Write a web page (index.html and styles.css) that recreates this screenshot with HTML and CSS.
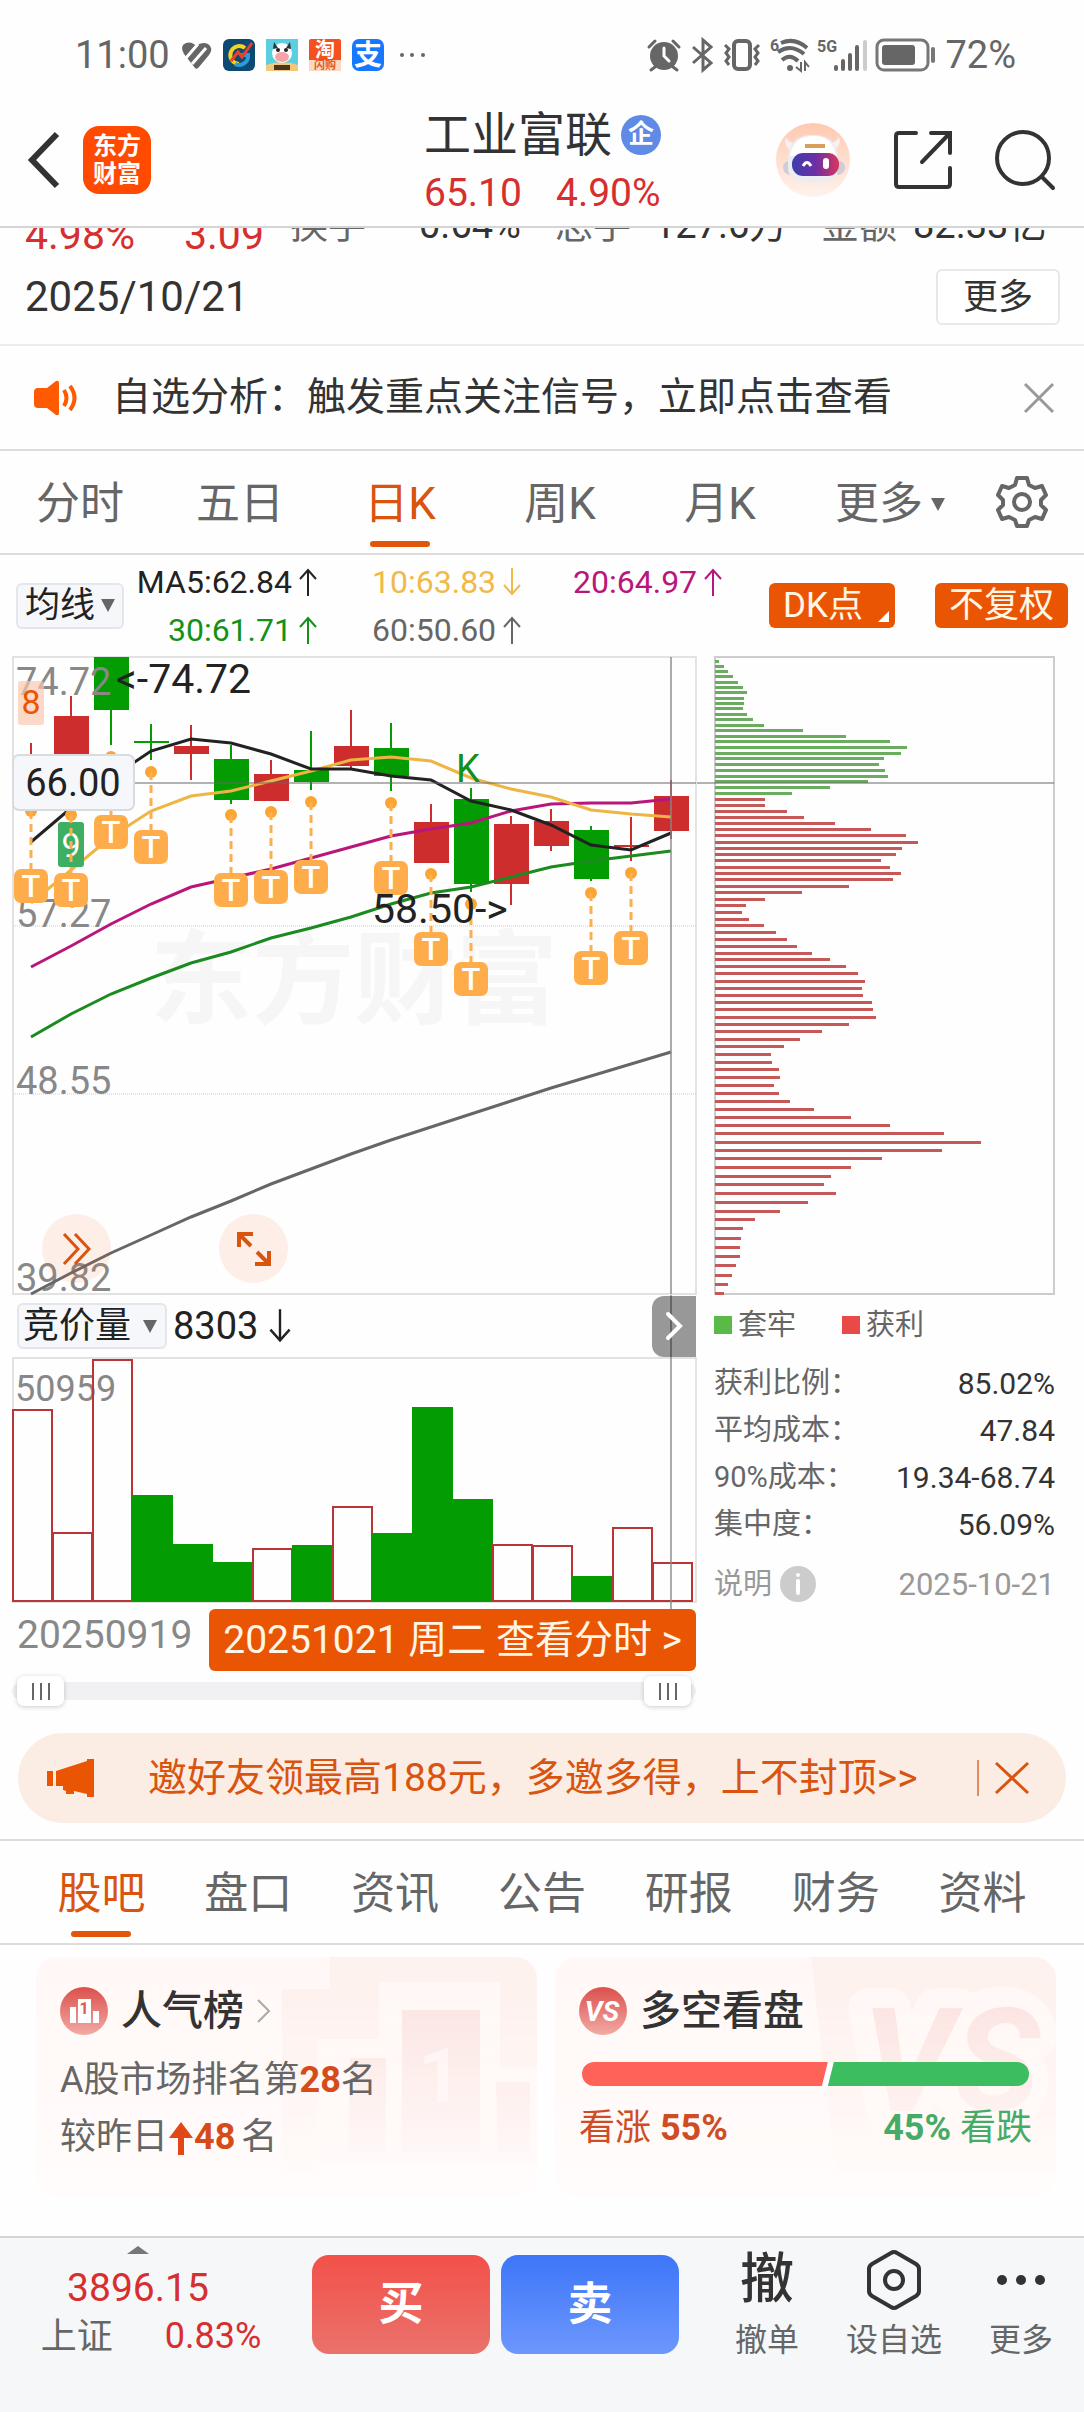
FILE: index.html
```html
<!DOCTYPE html>
<html lang="zh-CN">
<head>
    <meta charset="UTF-8">
    <meta name="viewport" content="width=device-width, initial-scale=1">
    <title>工业富联</title>
    <link rel="stylesheet" href="styles.css">
</head>
<body>
    <div class="status-bar">
        <div class="status-left">
            <span class="status-text">11:00</span>
            <svg width="31" height="28" viewBox="0 0 31 28"><path d="M14 27 3 13Q-2 5 5 2q6-2 10 3 6-5 12-2 6 4 1 11L18 26q-2 3-4 1z" fill="#666"/><path d="M5 17 17 3M11 23 25 7" stroke="#fff" stroke-width="3"/></svg>
            <svg width="32" height="32" viewBox="0 0 32 32"><rect width="32" height="32" rx="6" fill="#0c4a74"/><path d="M22 9a9 9 0 1 0-6 16" fill="none" stroke="#f5d321" stroke-width="4"/><path d="M12 25a9 9 0 0 0 13-9h-7" fill="none" stroke="#2b9be0" stroke-width="4"/><path d="M8 22l7-9 4 5 10-14" fill="none" stroke="#e8402a" stroke-width="3"/></svg>
            <svg width="32" height="32" viewBox="0 0 32 32"><rect width="32" height="32" fill="#59cfe0"/><path d="M0 26q16-6 32 0v6H0z" fill="#f3c979"/><circle cx="16" cy="14" r="10" fill="#fff"/><path d="M8 3l4 6-5 1zM24 3l-4 6 5 1z" fill="#333"/><ellipse cx="16" cy="18" rx="7" ry="5" fill="#f5a3a8"/><circle cx="12" cy="11" r="2" fill="#222"/><circle cx="20" cy="11" r="2" fill="#222"/><path d="M8 26h16v5H8z" fill="#4a3423"/></svg>
            <svg width="32" height="32" viewBox="0 0 32 32"><rect width="32" height="32" rx="2" fill="#f4511e"/><path d="M0 21h32v11H0z" fill="#fbd9c3"/><text x="16" y="18" class="app-text">淘</text><text x="16" y="30" class="app-small">闪购</text></svg>
            <svg width="32" height="32" viewBox="0 0 32 32"><rect width="32" height="32" rx="7" fill="#1677ff"/><text x="16" y="26" class="app-large">支</text></svg>
            <svg width="38" height="32" viewBox="0 0 38 32" fill="#666"><circle cx="7" cy="16" r="2"/><circle cx="17" cy="16" r="2"/><circle cx="28" cy="16" r="2"/></svg>
        </div>
        <div class="status-right">
            <svg width="34" height="32" viewBox="0 0 34 32"><circle cx="17" cy="17" r="14" fill="#666"/><path d="M2 8l6-6M32 8l-6-6M8 28l-4 3M26 28l4 3" stroke="#666" stroke-width="3" stroke-linecap="round"/><path d="M17 9v8l5 5" fill="none" stroke="#fff" stroke-width="3" stroke-linecap="round"/></svg>
            <svg width="24" height="34" viewBox="0 0 24 34" fill="none" stroke="#666" stroke-width="3"><path d="M3 9l18 16-8 7V2l8 7L3 25"/></svg>
            <svg width="38" height="32" viewBox="0 0 38 32" fill="none" stroke="#666" stroke-width="4"><rect x="11" y="2" width="16" height="28" rx="4"/><path d="M2 6l4 4-3 4 3 4-3 4 3 4M36 6l-4 4 3 4-3 4 3 4-3 4" stroke-width="3"/></svg>
            <svg width="38" height="34" viewBox="0 0 38 34" fill="none" stroke="#666" stroke-width="4"><path d="M11 5q14-6 26 5M8 14q13-9 26 2M12 22q8-7 16 1"/><circle cx="20" cy="30" r="3" fill="#666" stroke="none"/><path d="M31 24v9l-5-4M35 33v-9l4 5" stroke-width="2"/><text x="0" y="13" class="signal-text">6</text></svg>
            <svg width="50" height="34" viewBox="0 0 50 34" stroke="#666" stroke-width="4" stroke-linecap="round"><path d="M19 31v-2M26 31v-8M33 31V17M40 31V9"/><path d="M48 31V4" stroke="#ccc"/><text x="0" y="14" class="signal-text">5G</text></svg>
            <svg width="60" height="32" viewBox="0 0 60 32"><rect x="1" y="1" width="51" height="30" rx="7" fill="none" stroke="#777" stroke-width="3"/><rect x="6" y="6" width="33" height="20" rx="3" fill="#666"/><path d="M57 10v12" stroke="#777" stroke-width="4" stroke-linecap="round"/></svg>
            <span class="status-text">72%</span>
        </div>
    </div>

    <header class="header">
        <div class="header-left">
            <button class="icon-btn" aria-label="返回"><svg width="32" height="56" viewBox="0 0 32 56" fill="none" stroke="#333" stroke-width="6"><path d="M29 2 4 28l25 26"/></svg></button>
            <a class="app-logo" href="#"><span>东方</span><span>财富</span></a>
        </div>
        <div class="header-title">
            <h1>工业富联<span class="corp">企</span></h1>
            <div class="header-price"><span>65.10</span><span>4.90%</span></div>
        </div>
        <div class="header-right">
            <button class="icon-btn" aria-label="助手">
                <svg width="76" height="76" viewBox="0 0 76 76">
                    <defs>
                        <linearGradient id="visor" x1="0" y1="0" x2="1" y2="0"><stop offset="0" stop-color="#3c3fae"/><stop offset=".5" stop-color="#6b2fa5"/><stop offset="1" stop-color="#d8365c"/></linearGradient>
                        <linearGradient id="halo" x1="0" y1="0" x2="0" y2="1"><stop offset="0" stop-color="#ffc9b0"/><stop offset="1" stop-color="#fff3ed"/></linearGradient>
                    </defs>
                    <circle cx="38" cy="38" r="37" fill="url(#halo)"/>
                    <path d="M15 28q-7-5-4-13 2 6 9 6zM59 28q8-5 5-13-2 5-9 6z" fill="#f6f1f2"/>
                    <path d="M8 46q0-8 8-7v14q-7 0-8-7zM70 46q0-8-8-7v14q7 0 8-7z" fill="#cfcdd6"/>
                    <path d="M13 36q1-23 25-23t25 23v12q-2 13-25 13T13 48z" fill="#ececf1"/>
                    <path d="M15 34q3-20 23-20t23 20z" fill="#fff"/>
                    <rect x="17" y="31" width="47" height="23" rx="11" fill="url(#visor)"/>
                    <path d="M28 44q4-7 8 0" fill="none" stroke="#fff" stroke-width="3"/>
                    <rect x="48" y="36" width="6" height="11" rx="3" fill="#fff"/>
                    <path d="M30 24h20" stroke="#d99e5b" stroke-width="4"/>
                </svg>
            </button>
            <button class="icon-btn" aria-label="分享"><svg width="60" height="60" viewBox="0 0 60 60" fill="none" stroke="#333" stroke-width="4" stroke-linecap="round"><path d="M23 3H6q-3 0-3 3v48q0 3 3 3h48q3 0 3-3V38M38 3h19v20M57 3 29 32"/></svg></button>
            <button class="icon-btn" aria-label="搜索"><svg width="60" height="60" viewBox="0 0 60 60" fill="none" stroke="#333" stroke-width="4" stroke-linecap="round"><circle cx="28" cy="28" r="26"/><path d="M47 47l11 11"/></svg></button>
        </div>
    </header>

    <section class="quote">
        <div class="quote-row">
            <span class="quote-up">4.98%</span>
            <span class="quote-up">3.09</span>
            <span class="quote-name">换手</span>
            <span>0.64%</span>
            <span class="quote-name">总手</span>
            <span>127.6万</span>
            <span class="quote-name">金额</span>
            <span>82.33亿</span>
        </div>
        <div class="quote-date">
            <span>2025/10/21</span>
            <button class="more-btn">更多</button>
        </div>
    </section>

    <section class="notice">
        <svg width="46" height="36" viewBox="0 0 46 36"><path d="M4 8h9L22 1q3-1 3 2v30q0 3-3 2l-9-7H4q-4 0-4-4V12q0-4 4-4z" fill="#ff5a00"/><path d="M30 10q5 8 0 16M36 6q9 12 0 24" fill="none" stroke="#ff5a00" stroke-width="4"/></svg>
        <a href="#">自选分析：触发重点关注信号，立即点击查看</a>
        <button class="icon-btn" aria-label="关闭"><svg width="30" height="30" viewBox="0 0 30 30" stroke="#999" stroke-width="3"><path d="M1 1l28 28M29 1 1 29"/></svg></button>
    </section>

    <nav class="period-tabs">
        <a href="#">分时</a>
        <a href="#">五日</a>
        <a href="#" class="active">日K</a>
        <a href="#">周K</a>
        <a href="#">月K</a>
        <a href="#">更多<i class="caret"></i></a>
        <button class="icon-btn" aria-label="设置"><svg width="52" height="52" viewBox="0 0 52 52" fill="none" stroke="#666" stroke-width="4" stroke-linejoin="round"><path d="M21 2h10l2 7 6 3 7-2 4 9-5 5v5l5 5-4 9-7-2-6 3-2 6H21l-2-6-6-3-7 2-4-9 5-5v-5l-5-5 4-9 7 2 6-3z"/><circle cx="26" cy="26" r="8"/></svg></button>
    </nav>

    <section class="ma-bar">
        <button class="select-btn">均线<i class="caret"></i></button>
        <div class="ma-list">
            <span class="ma5">MA5:62.84<svg class="arrow"><use href="#up"/></svg></span>
            <span class="ma10">10:63.83<svg class="arrow"><use href="#down"/></svg></span>
            <span class="ma20">20:64.97<svg class="arrow"><use href="#up"/></svg></span>
            <span class="ma30">30:61.71<svg class="arrow"><use href="#up"/></svg></span>
            <span class="ma60">60:50.60<svg class="arrow"><use href="#up"/></svg></span>
        </div>
        <button class="orange-btn dk">DK点</button>
        <button class="orange-btn">不复权</button>
    </section>

    <svg class="symbols">
        <symbol id="up" viewBox="0 0 20 28"><path d="M10 28V2M2 11l8-9 8 9" fill="none" stroke="currentColor" stroke-width="2"/></symbol>
        <symbol id="down" viewBox="0 0 20 28"><path d="M10 0v26M2 17l8 9 8-9" fill="none" stroke="currentColor" stroke-width="2"/></symbol>
    </svg>

    <main class="charts">
        <div class="chart-left">
            <div class="kline-box">
                <svg id="kline" class="chart" viewBox="12 656 684 639"></svg>
                <button class="round-btn" aria-label="展开"><svg width="30" height="34" viewBox="0 0 30 34" fill="none" stroke="#d9540f" stroke-width="3"><path d="M2 2l14 15L2 32M13 2l14 15-14 15"/></svg></button>
                <button class="round-btn round-full" aria-label="全屏"><svg width="34" height="34" viewBox="0 0 34 34" fill="none" stroke="#d9540f" stroke-width="4"><path d="M2 15V2h14M2 2l12 12M32 19v13H18M32 32 20 20"/></svg></button>
            </div>
            <div class="volume-head">
                <button class="select-btn wide">竞价量<i class="caret"></i></button>
                <span>8303</span>
                <svg class="arrow big"><use href="#down"/></svg>
                <button class="fold-btn" aria-label="收起"><svg width="18" height="28" viewBox="0 0 18 28" fill="none" stroke="#fff" stroke-width="4" stroke-linecap="round"><path d="M3 2l12 12L3 26"/></svg></button>
            </div>
            <svg id="volume" class="chart" viewBox="12 1357 684 247"></svg>
            <div class="date-row">
                <span>20250919</span>
                <button class="time-btn">20251021 周二 查看分时 &gt;</button>
            </div>
            <div class="range">
                <input type="range" aria-label="起始日期" min="0" max="100" value="0">
                <input type="range" aria-label="结束日期" min="0" max="100" value="100">
            </div>
        </div>
        <aside class="chart-right">
            <svg id="chips" class="chart" viewBox="714 656 341 639"></svg>
            <div class="legend">
                <span><i class="box-green"></i>套牢</span>
                <span><i class="box-red"></i>获利</span>
            </div>
            <dl class="stats">
                <div><dt>获利比例：</dt><dd>85.02%</dd></div>
                <div><dt>平均成本：</dt><dd>47.84</dd></div>
                <div><dt>90%成本：</dt><dd>19.34-68.74</dd></div>
                <div><dt>集中度：</dt><dd>56.09%</dd></div>
            </dl>
            <div class="explain">
                <span>说明</span>
                <svg width="36" height="36" viewBox="0 0 36 36"><circle cx="18" cy="18" r="18" fill="#ccc"/><path d="M18 15v12" stroke="#fff" stroke-width="4" stroke-linecap="round"/><circle cx="18" cy="9" r="2" fill="#fff"/></svg>
                <time>2025-10-21</time>
            </div>
        </aside>
    </main>

    <section class="banner">
        <svg width="48" height="40" viewBox="0 0 48 40" fill="#ea5504"><path d="M0 13h6v15H0zM9 13 40 3V1h7v38h-7v-3l-13-3v3h-8v-3l-3-1v-4H9z"/></svg>
        <a href="#">邀好友领最高188元，多邀多得，上不封顶&gt;&gt;</a>
        <button class="icon-btn" aria-label="关闭"><svg width="34" height="32" viewBox="0 0 34 32" stroke="#d9540f" stroke-width="3"><path d="M1 1l32 30M33 1 1 31"/></svg></button>
    </section>

    <nav class="info-tabs">
        <a href="#" class="active">股吧</a>
        <a href="#">盘口</a>
        <a href="#">资讯</a>
        <a href="#">公告</a>
        <a href="#">研报</a>
        <a href="#">财务</a>
        <a href="#">资料</a>
    </nav>

    <section class="cards">
        <article class="card">
            <svg class="card-bg" width="255" height="220" viewBox="0 0 255 220">
                <path d="M48 0H255V220H0V32H48z" fill="#fef2ef"/>
                <path d="M35 220V82H97V25H218V110H255V220z" fill="#fff8f6"/>
                <path d="M120 53h78v143h-78zM68 101h36v95H66zM214 125h34v71h-32z" fill="#fbe6e3"/>
                <text x="158" y="145" class="bg-one">1</text>
            </svg>
            <h2>
                <svg width="48" height="48" viewBox="0 0 48 48"><defs><linearGradient id="redCircle" x1="0" y1="0" x2="0" y2="1"><stop offset="0" stop-color="#db504c"/><stop offset="1" stop-color="#f3aaa5"/></linearGradient></defs><circle cx="24" cy="24" r="24" fill="url(#redCircle)"/><path d="M18 12h13v24H18zM10 20h6v16h-6zM33 24h6v12h-6z" fill="#fff"/><text x="24" y="27" class="rank-one">1</text></svg>
                人气榜
                <svg width="14" height="24" viewBox="0 0 14 24" fill="none" stroke="#aaa" stroke-width="2"><path d="M1 1l11 11L1 23"/></svg>
            </h2>
            <p>A股市场排名第<strong>28</strong>名</p>
            <p class="rank-change">较昨日<svg width="26" height="34" viewBox="0 0 26 34" fill="#e14717"><path d="M13 1l12 16h-9v17h-6V17H1z"/></svg><strong>48</strong><span>名</span></p>
        </article>
        <article class="card">
            <svg class="card-bg" width="245" height="220" viewBox="0 0 245 220">
                <path d="M0 0H245V220H25z" fill="#fef2ef"/>
                <text x="136" y="154" class="bg-vs-back">VS</text>
                <text x="140" y="154" class="bg-vs">VS</text>
            </svg>
            <h2>
                <svg width="48" height="48" viewBox="0 0 48 48"><circle cx="24" cy="24" r="24" fill="url(#redCircle)"/><text x="23" y="34" class="vs-text">VS</text></svg>
                多空看盘
            </h2>
            <div class="vs-bar">
                <span class="vs-up" style="width: 55%"></span>
                <span class="vs-down"></span>
            </div>
            <div class="vs-labels">
                <span class="label-up">看涨 <strong>55%</strong></span>
                <span class="label-down"><strong>45%</strong> 看跌</span>
            </div>
        </article>
    </section>

    <footer class="footer">
        <a class="index" href="#">
            <i class="caret-up"></i>
            <span class="index-value">3896.15</span>
            <span class="index-row"><span>上证</span><em>0.83%</em></span>
        </a>
        <button class="trade buy">买</button>
        <button class="trade sell">卖</button>
        <div class="tools">
            <a href="#"><span class="tool-icon">撤</span>撤单</a>
            <a href="#"><span class="tool-icon"><svg width="54" height="60" viewBox="0 0 54 60" fill="none" stroke="#333" stroke-width="4" stroke-linejoin="round"><path d="M24 3q3-2 6 0l19 11q3 2 3 5v22q0 3-3 5L30 57q-3 2-6 0L5 46q-3-2-3-5V19q0-3 3-5z"/><circle cx="27" cy="30" r="9"/></svg></span>设自选</a>
            <a href="#"><span class="tool-icon"><svg width="48" height="10" viewBox="0 0 48 10" fill="#333"><circle cx="5" cy="5" r="5"/><circle cx="24" cy="5" r="5"/><circle cx="43" cy="5" r="5"/></svg></span>更多</a>
        </div>
    </footer>

    <script src="script.js"></script>
</body>
</html>
```
FILE: styles.css
```css
* {
    box-sizing: border-box;
}

body {
    margin: 0;
    background-color: #fefefe;
    color: #333;
    font-family: Roboto, "Noto Sans CJK SC", sans-serif;
    font-size: 36px;
    line-height: 1;
}

a {
    color: inherit;
    text-decoration: none;
}

button {
    font-family: inherit;
    line-height: 1;
    cursor: pointer;
}

h1, h2, p, dl, dd {
    margin: 0;
    font-weight: normal;
}

i, em {
    font-style: normal;
}

svg {
    flex-shrink: 0;
    overflow: visible;
}

.icon-btn {
    display: flex;
    padding: 0;
    border: none;
    background: none;
}

.symbols {
    position: absolute;
    width: 0;
    height: 0;
}

.caret {
    border: 7px solid transparent;
    border-top: 13px solid #666;
    border-bottom: none;
}

/* status bar */
.status-bar {
    display: flex;
    justify-content: space-between;
    height: 94px;
    padding: 16px 68px 0 75px;
    color: #666;
    font-size: 38px;
}

.status-left, .status-right {
    display: flex;
    align-items: center;
    gap: 10px;
}

.status-left {
    gap: 11px;
}

.status-right {
    gap: 9px;
}

.app-text, .app-small, .app-large {
    fill: #fff;
    font-size: 20px;
    font-weight: bold;
    text-anchor: middle;
}

.app-small {
    fill: #e35a1c;
    font-size: 11px;
}

.app-large {
    font-size: 28px;
}

.signal-text {
    fill: #666;
    stroke: none;
    font-size: 16px;
    font-weight: bold;
}

/* header */
.header {
    display: grid;
    grid-template-columns: 1fr auto 1fr;
    align-items: center;
    height: 134px;
    padding: 0 29px 0 28px;
    border-bottom: 2px solid #d5d5d5;
}

.header-left, .header-right {
    display: flex;
    align-items: center;
    gap: 23px;
}

.header-right {
    justify-content: flex-end;
    gap: 42px;
}

.app-logo {
    display: flex;
    flex-direction: column;
    align-items: center;
    justify-content: center;
    gap: 4px;
    width: 68px;
    height: 68px;
    border-radius: 16px;
    background-color: #ff4a00;
    color: #fff;
    font-size: 24px;
    font-weight: bold;
}

.header-title {
    padding: 10px 0 0 2px;
}

.header-title h1 {
    display: flex;
    align-items: center;
    gap: 9px;
    font-size: 47px;
    line-height: 56px;
}

.corp {
    width: 40px;
    height: 40px;
    border-radius: 50%;
    background-color: #5f8be6;
    color: #fff;
    font-size: 26px;
    font-weight: bold;
    line-height: 38px;
    text-align: center;
}

.header-price {
    display: flex;
    gap: 34px;
    color: #d62f2f;
    font-size: 39px;
    line-height: 60px;
}

/* quote */
.quote {
    height: 118px;
    padding: 0 24px 0 25px;
    border-bottom: 2px solid #ececec;
}

.quote-row {
    display: grid;
    grid-template-columns: 159fr 106fr 129fr 136fr 99fr 167fr 92fr 147fr;
    grid-template-rows: 24px;
    align-items: end;
    height: 24px;
    overflow: hidden;
    font-size: 38px;
    line-height: 54px;
    white-space: nowrap;
}

.quote-up {
    color: #d62f2f;
    font-size: 41px;
    line-height: 34px;
}

.quote-name {
    color: #666;
}

.quote-date {
    display: flex;
    align-items: center;
    justify-content: space-between;
    padding-top: 15px;
    font-size: 42px;
    line-height: 60px;
}

.more-btn {
    width: 124px;
    height: 56px;
    border: 2px solid #e6e8ea;
    border-radius: 6px;
    background-color: #fff;
    color: #333;
    font-size: 35px;
}

/* notice */
.notice {
    display: flex;
    align-items: center;
    height: 105px;
    padding: 0 30px 0 34px;
    border-bottom: 2px solid #dcdcdc;
    font-size: 39px;
}

.notice a {
    flex: 1;
    margin-left: 32px;
}

/* period tabs */
.period-tabs {
    display: grid;
    grid-template-columns: repeat(5, 160fr) 180fr 104fr;
    align-items: center;
    height: 104px;
    border-bottom: 2px solid #dcdcdc;
}

.period-tabs a, .info-tabs a {
    position: relative;
    display: flex;
    align-items: center;
    justify-content: center;
    height: 100%;
    padding-top: 4px;
    color: #666;
    font-size: 44px;
}

.period-tabs .caret {
    margin-left: 8px;
}

.period-tabs .icon-btn {
    padding-left: 16px;
}

.period-tabs .active, .info-tabs .active {
    color: #d9540f;
}

.period-tabs .active::after, .info-tabs .active::after {
    content: "";
    position: absolute;
    bottom: 6px;
    left: 50%;
    width: 60px;
    height: 6px;
    margin-left: -30px;
    border-radius: 3px;
    background-color: #e2560b;
}

/* moving averages */
.ma-bar {
    display: flex;
    align-items: center;
    height: 101px;
    padding: 0 16px;
}

.select-btn {
    display: flex;
    align-items: center;
    justify-content: space-between;
    width: 108px;
    height: 46px;
    padding: 0 7px;
    border: 2px solid #e3e6ea;
    border-radius: 6px;
    background-color: #f6f7fa;
    color: #222;
    font-size: 35px;
}

.select-btn.wide {
    width: 150px;
    padding: 0 8px 0 4px;
    font-size: 36px;
}

.ma-list {
    display: grid;
    grid-template-columns: 178px 147px 148px;
    gap: 0 54px;
    margin: 0 auto 0 16px;
    font-size: 32px;
    line-height: 48px;
}

.ma-list span {
    display: flex;
    align-items: center;
    gap: 6px;
    white-space: nowrap;
}

.arrow {
    width: 20px;
    height: 28px;
}

.arrow.big {
    width: 24px;
    height: 34px;
}

.ma5 {
    color: #222;
}

.ma10 {
    color: #f0b94a;
}

.ma20 {
    color: #b9167c;
}

.ma30 {
    color: #12911a;
}

.ma60 {
    color: #666;
}

.ma5, .ma30 {
    justify-content: flex-end;
}

.orange-btn {
    height: 45px;
    padding: 0 14px;
    border: none;
    border-radius: 6px;
    background-color: #ea5504;
    color: #fff6e6;
    font-size: 35px;
}

.dk {
    position: relative;
    width: 126px;
    margin-right: 40px;
    text-align: left;
}

.dk::after {
    content: "";
    position: absolute;
    right: 6px;
    bottom: 6px;
    border-left: 11px solid transparent;
    border-bottom: 11px solid #fff;
}

/* charts */
.charts {
    display: grid;
    grid-template-columns: 684fr 341fr;
    gap: 18px;
    padding: 0 29px 0 12px;
}

.chart {
    display: block;
    width: 100%;
}

.chart-left, .kline-box {
    position: relative;
}

.axis {
    fill: #888;
    font-size: 38px;
}

.axis-small {
    fill: #888;
    font-size: 36px;
}

.price {
    fill: #222;
    font-size: 41px;
}

.cursor-price {
    fill: #222;
    font-size: 38px;
    text-anchor: middle;
}

.mark-t {
    fill: #fff;
    font-size: 31px;
    font-weight: 500;
    text-anchor: middle;
}

.mark-8, .mark-9, .mark-k {
    fill: #ea5504;
    font-size: 34px;
    text-anchor: middle;
}

.mark-9 {
    fill: #fff;
}

.mark-k {
    fill: #12911a;
    font-size: 38px;
}

.watermark {
    fill: #f6f6f6;
    font-size: 102px;
    font-weight: bold;
}

.round-btn {
    position: absolute;
    bottom: 12px;
    left: 30px;
    display: flex;
    align-items: center;
    justify-content: center;
    width: 69px;
    height: 69px;
    border: none;
    border-radius: 50%;
    background-color: rgba(250, 110, 30, 0.1);
}

.round-full {
    left: 207px;
}

.volume-head {
    display: flex;
    align-items: center;
    height: 62px;
    padding-left: 5px;
    color: #222;
    font-size: 38px;
}

.volume-head span {
    margin: 0 10px 0 6px;
}

.fold-btn {
    z-index: 1;
    display: flex;
    align-items: center;
    justify-content: center;
    width: 44px;
    height: 61px;
    margin-left: auto;
    padding: 0;
    border: none;
    border-radius: 12px 0 0 12px;
    background-color: rgba(0, 0, 0, 0.4);
}

.date-row {
    display: flex;
    justify-content: space-between;
    padding: 5px 0 0 5px;
    color: #888;
    font-size: 39px;
    line-height: 52px;
}

.time-btn {
    z-index: 1;
    height: 62px;
    padding: 0 14px;
    border: none;
    border-radius: 6px;
    background-color: #ea5504;
    color: #fff6e6;
    font-size: 39px;
}

.range {
    position: relative;
    height: 18px;
    margin-top: 11px;
    border-radius: 9px;
    background-color: #f1f1f4;
}

.range input {
    position: absolute;
    top: -6px;
    left: 5px;
    width: calc(100% - 10px);
    height: 30px;
    margin: 0;
    background: none;
    appearance: none;
    pointer-events: none;
}

.range input::-webkit-slider-thumb {
    width: 47px;
    height: 30px;
    border-radius: 7px;
    background: repeating-linear-gradient(90deg, #666 0 2px, #fff 2px 8px) center / 18px 17px no-repeat #fff;
    box-shadow: 0 1px 5px rgba(0, 0, 0, 0.2);
    appearance: none;
    pointer-events: auto;
}

.legend {
    display: flex;
    gap: 46px;
    padding: 14px 0 19px;
    color: #666;
    font-size: 29px;
    line-height: 32px;
}

.legend span {
    display: flex;
    align-items: center;
    gap: 6px;
}

.legend i {
    width: 18px;
    height: 18px;
    background-color: #5bb947;
}

.legend .box-red {
    background-color: #e84a4a;
}

.stats div {
    display: flex;
    justify-content: space-between;
    font-size: 30px;
    line-height: 47px;
}

.stats dt {
    color: #666;
    font-size: 29px;
}

.explain {
    display: flex;
    align-items: center;
    gap: 8px;
    padding: 18px 0 0;
    color: #999;
    font-size: 29px;
}

.explain time {
    margin-left: auto;
    font-size: 31px;
}

/* banner */
.banner {
    display: flex;
    align-items: center;
    height: 90px;
    margin: 33px 18px 16px;
    padding: 0 37px 0 29px;
    border-radius: 45px;
    background-color: #fcede4;
    color: #d9540f;
    font-size: 39px;
}

.banner a {
    flex: 1;
    margin-left: 53px;
}

.banner .icon-btn {
    padding: 2px 0 2px 16px;
    border-left: 2px solid #e58a5c;
}

/* info tabs */
.info-tabs {
    display: grid;
    grid-template-columns: repeat(7, 1fr);
    height: 106px;
    padding: 0 28px;
    border-top: 2px solid #dcdcdc;
    border-bottom: 2px solid #dcdcdc;
}

/* cards */
.cards {
    display: grid;
    grid-template-columns: 1fr 1fr;
    gap: 18px;
    padding: 12px 28px 40px 36px;
}

.card {
    position: relative;
    height: 239px;
    padding: 27px 24px;
    overflow: hidden;
    border-radius: 22px;
    background: linear-gradient(#fff8f6, #fffcfb);
    color: #666;
}

.card-bg {
    position: absolute;
    top: 0;
    right: 0;
    mask-image: linear-gradient(#000 20%, transparent);
}

.card h2, .card p, .vs-bar, .vs-labels {
    position: relative;
}

.card h2 {
    display: flex;
    align-items: center;
    gap: 13px;
    height: 54px;
    color: #333;
    font-size: 41px;
    font-weight: 500;
}

.card p {
    display: flex;
    align-items: center;
    margin-top: 14px;
    font-size: 36px;
    line-height: 57px;
}

.card p + p {
    margin-top: 0;
}

.card p strong {
    color: #d64b1a;
}

.rank-change span {
    margin-left: 6px;
}

.bg-one, .bg-vs, .bg-vs-back {
    fill: #fff4f2;
    font-size: 76px;
    font-weight: bold;
    text-anchor: middle;
}

.bg-vs {
    fill: #fbe4e1;
    font-size: 144px;
    font-style: italic;
}

.bg-vs-back {
    stroke: #fff8f6;
    stroke-width: 40px;
    stroke-linejoin: round;
    font-size: 144px;
    font-style: italic;
}

.rank-one, .vs-text {
    fill: #db5a55;
    font-size: 16px;
    font-weight: bold;
    text-anchor: middle;
}

.vs-text {
    fill: #fff;
    font-size: 28px;
    font-style: italic;
}

.vs-bar {
    display: flex;
    height: 24px;
    margin: 24px 3px 0;
    border-radius: 12px;
    overflow: hidden;
    background-color: #fff;
}

.vs-up {
    background-color: #ff6257;
    clip-path: polygon(0 0, 100% 0, calc(100% - 6px) 100%, 0 100%);
}

.vs-down {
    flex: 1;
    background-color: #3bbd60;
    clip-path: polygon(6px 0, 100% 0, 100% 100%, 0 100%);
}

.vs-labels {
    display: flex;
    justify-content: space-between;
    margin-top: 20px;
    font-size: 36px;
    line-height: 44px;
}

.label-up {
    color: #cf4d25;
}

.label-down {
    color: #46ab66;
}

/* footer */
.footer {
    display: flex;
    height: 176px;
    padding: 17px 31px 0 34px;
    border-top: 2px solid #d3d6d9;
    background-color: #f6f7f9;
}

.index {
    position: relative;
    display: flex;
    flex-direction: column;
    align-items: center;
    width: 236px;
    margin-right: 42px;
    padding: 9px 28px 0 0;
    color: #666;
}

.caret-up {
    position: absolute;
    top: -9px;
    border: 11px solid transparent;
    border-top: none;
    border-bottom: 8px solid #777;
}

.index-value, .index em {
    color: #d62f2f;
    font-size: 39px;
    line-height: 48px;
}

.index-row {
    display: flex;
    gap: 52px;
    margin-left: 26px;
    line-height: 50px;
    white-space: nowrap;
}

.index-row em {
    font-size: 36px;
}

.trade {
    flex: 1;
    height: 99px;
    padding: 0;
    border: none;
    border-radius: 17px;
    color: #fff;
    font-size: 45px;
    font-weight: bold;
}

.buy {
    margin-right: 11px;
    background: linear-gradient(#f25149, #ea726c);
}

.sell {
    background: linear-gradient(#3d76f8, #6d97fd);
}

.tools {
    display: flex;
    justify-content: space-between;
    width: 318px;
    margin-left: 56px;
}

.tools a {
    display: flex;
    flex-direction: column;
    align-items: center;
    color: #666;
    font-size: 32px;
}

.tool-icon {
    display: flex;
    align-items: center;
    height: 68px;
    margin-top: -9px;
    margin-bottom: 10px;
    color: #333;
    font-size: 54px;
    font-weight: 500;
}
```
FILE: script.js
```js
const RED = '#cd2d2d';
const GREEN = '#039c03';
const step = 40;
const startX = 31;

// [color, high, low, top, bottom]
const candles = [
    [RED, 743, 800, 760, 800],
    [RED, 696, 790, 716, 790],
    [GREEN, 657, 745, 657, 710],
    [GREEN, 724, 760, 741, 743],
    [RED, 725, 780, 746, 754],
    [GREEN, 745, 804, 759, 800],
    [RED, 760, 800, 774, 801],
    [GREEN, 731, 790, 770, 782],
    [RED, 710, 768, 746, 766],
    [GREEN, 723, 791, 748, 776],
    [RED, 804, 863, 822, 863],
    [GREEN, 788, 892, 799, 884],
    [RED, 816, 905, 824, 884],
    [RED, 809, 851, 821, 846],
    [GREEN, 826, 881, 830, 879],
    [RED, 817, 861, 845, 847],
    [RED, 780, 839, 796, 831]
];

const averages = [
    ['#666', [1294, 1273, 1253, 1235, 1217, 1201, 1184, 1169, 1154, 1140, 1127, 1114, 1101, 1088, 1076, 1064, 1052]],
    ['#1b8a1f', [1037, 1014, 994, 978, 963, 952, 938, 928, 917, 904, 893, 887, 877, 867, 861, 856, 851]],
    ['#b9167c', [967, 946, 924, 904, 887, 878, 869, 858, 847, 836, 829, 823, 811, 804, 803, 803, 799]],
    ['#efb544', [903, 870, 837, 811, 796, 791, 781, 771, 760, 757, 761, 778, 789, 797, 810, 814, 817]],
    ['#222', [842, 808, 778, 751, 739, 743, 754, 769, 769, 776, 780, 801, 810, 825, 845, 850, 833]]
];

// candle index -> y of the dot
const tMarks = { 0: 811, 1: 815, 2: 757, 3: 772, 5: 815, 6: 812, 7: 802, 9: 803, 10: 874, 11: 904, 14: 893, 15: 873 };

const volumes = [
    [RED, 1409], [RED, 1532], [RED, 1359], [GREEN, 1495], [GREEN, 1544], [GREEN, 1562],
    [RED, 1548], [GREEN, 1545], [RED, 1506], [GREEN, 1533], [GREEN, 1407], [GREEN, 1499],
    [RED, 1544], [RED, 1545], [GREEN, 1576], [RED, 1527], [RED, 1562]
];

const chipY = [
    661, 666, 671, 676, 682, 687, 692, 698, 703, 708, 714, 719, 725, 730, 736, 741, 747, 753, 758, 764, 770, 776, 781, 787, 793,
    799, 805, 811, 817, 823, 829, 835, 842, 848, 854, 860, 867, 873, 879, 886, 892, 899, 905, 912, 919, 925, 932, 939, 946, 953, 959,
    966, 973, 981, 988, 995, 1002, 1009, 1017, 1024, 1031, 1039, 1046, 1054, 1062, 1069, 1077, 1085, 1093, 1101, 1109, 1117, 1125,
    1133, 1142, 1150, 1158, 1167, 1176, 1184, 1193, 1202, 1211, 1219, 1228, 1238, 1247, 1256, 1265, 1275, 1284, 1293
];
const chipWidth = [
    4, 9, 13, 18, 23, 28, 32, 29, 29, 28, 32, 38, 49, 88, 131, 175, 192, 186, 169, 164, 170, 173, 153, 115, 77,
    50, 50, 72, 89, 120, 156, 191, 203, 187, 181, 166, 175, 186, 178, 134, 87, 50, 31, 27, 34, 49, 61, 72, 82, 97, 115,
    131, 143, 150, 147, 148, 157, 158, 161, 134, 107, 85, 69, 56, 57, 64, 65, 59, 64, 75, 99, 136, 175,
    229, 266, 227, 167, 136, 116, 109, 121, 93, 65, 40, 28, 26, 25, 25, 21, 17, 13, 9
];
const lossCount = 25;

function line(x1, y1, x2, y2, color, width, extra = '') {
    return `<line x1="${x1}" y1="${y1}" x2="${x2}" y2="${y2}" stroke="${color}" stroke-width="${width}" ${extra}/>`;
}

function rect(x, y, w, h, fill, extra = '') {
    return `<rect x="${x}" y="${y}" width="${w}" height="${h}" fill="${fill}" ${extra}/>`;
}

function text(x, y, cls, value) {
    return `<text x="${x}" y="${y}" class="${cls}">${value}</text>`;
}

function drawKline() {
    let out = text(150, 1016, 'watermark', '东方财富');
    out += rect(13, 657, 683, 637, 'none', 'stroke="#e2e2e2" stroke-width="2"');
    out += line(13, 926, 696, 926, '#ccc', 1, 'stroke-dasharray="1 1"');
    out += line(13, 1094, 696, 1094, '#ccc', 1, 'stroke-dasharray="1 1"');

    candles.forEach(([color, high, low, top, bottom], i) => {
        const x = startX + i * step;
        out += line(x, high, x, low, color, 2);
        out += rect(x - 17, top, 35, bottom - top, color);
    });

    out += text(16, 695, 'axis', '74.72');
    out += text(16, 927, 'axis', '57.27');
    out += text(16, 1094, 'axis', '48.55');
    out += text(16, 1291, 'axis', '39.82');

    averages.forEach(([color, values]) => {
        const points = values.map((y, i) => `${startX + i * step},${y}`).join(' ');
        out += `<polyline points="${points}" fill="none" stroke="${color}" stroke-width="3"/>`;
    });

    out += rect(18, 681, 26, 44, '#fbc8b0', 'rx="3" opacity="0.7"');
    out += text(31, 714, 'mark-8', '8');
    out += rect(58, 822, 26, 45, '#3dae62', 'rx="3"');
    out += text(71, 857, 'mark-9', '9');
    out += text(468, 782, 'mark-k', 'K');

    Object.entries(tMarks).forEach(([i, y]) => {
        const x = startX + i * step;
        out += `<circle cx="${x}" cy="${y}" r="6" fill="#fca532"/>`;
        out += line(x, y, x, y + 58, '#fbb050', 3, 'stroke-dasharray="8 5"');
        out += rect(x - 17, y + 58, 34, 34, '#ffad4b', 'rx="7"');
        out += text(x, y + 86, 'mark-t', 'T');
    });

    out += text(116, 693, 'price', '&lt;-74.72');
    out += text(372, 923, 'price', '58.50-&gt;');

    out += line(671, 657, 671, 1294, '#888', 2, 'opacity="0.7"');
    out += line(12, 783, 696, 783, '#666', 1);
    out += rect(13, 755, 121, 55, '#f5f7fa', 'rx="6" stroke="#d9dcdf" stroke-width="2"');
    out += text(73, 796, 'cursor-price', '66.00');
    document.getElementById('kline').innerHTML = out;
}

function drawVolume() {
    let out = rect(13, 1358, 683, 244, 'none', 'stroke="#e2e2e2" stroke-width="2"');
    out += text(15, 1401, 'axis-small', '50959');
    volumes.forEach(([color, top], i) => {
        const x = 12 + i * step;
        if (color === GREEN) {
            out += rect(x, top, step + 1, 1602 - top, '#039c03');
        } else {
            out += rect(x + 1, top + 1, step - 1, 1600 - top, 'none', 'stroke="#b93536" stroke-width="2"');
        }
    });
    out += line(671, 1294, 671, 1609, '#888', 2, 'opacity="0.7"');
    document.getElementById('volume').innerHTML = out;
}

function drawChips() {
    let out = rect(715, 657, 339, 637, 'none', 'stroke="#ccc" stroke-width="2"');
    chipY.forEach((y, i) => {
        out += rect(715, y - 1, chipWidth[i], 3, i < lossCount ? '#6aad5f' : '#c65858');
    });
    out += line(696, 783, 1054, 783, '#666', 1);
    document.getElementById('chips').innerHTML = out;
}

drawKline();
drawVolume();
drawChips();
```
